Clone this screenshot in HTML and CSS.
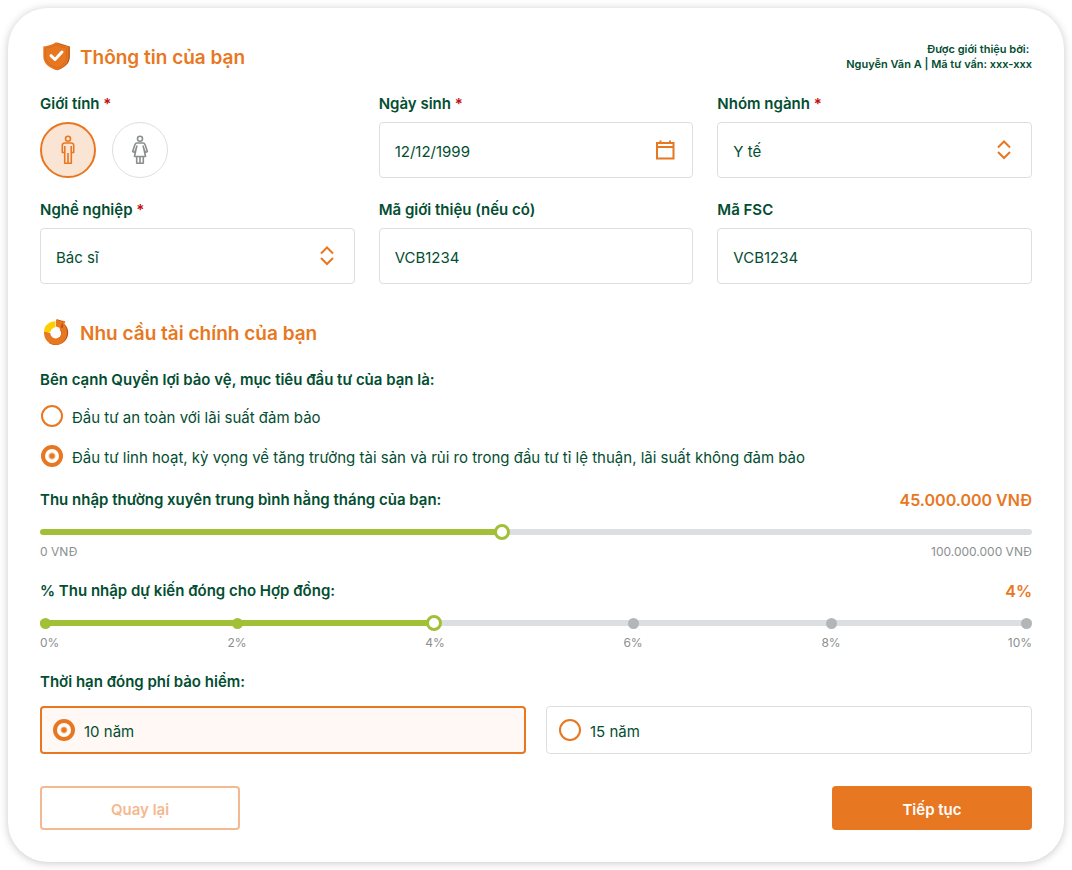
FILE: index.html
```html
<!DOCTYPE html>
<html lang="vi">
<head>
<meta charset="utf-8">
<meta name="viewport" content="width=device-width, initial-scale=1">
<title>Thông tin của bạn</title>
<link rel="stylesheet" href="styles.css">
</head>
<body>
<form class="card">
  <header class="section-head">
    <svg class="section-icon" viewBox="0 0 32 32" aria-hidden="true">
      <path fill="#b9500f" d="M17 2.500 29.900 6.500v10.300c0 6.500-5.400 11-12.400 13.500L14 29z"/>
      <path fill="#e87722" d="M16 2.300c3.800 2.300 8 3.500 12.600 4.200v10.300c0 6.200-4.600 10.700-11.600 13.400C8.500 28 3.300 23 3.300 16.500v-10C8 6 12.200 4.800 16 2.300z"/>
      <path fill="none" stroke="#cf6518" stroke-width=".7" d="M16 4.500c3.400 1.900 6.600 2.900 10.600 3.600v8.700c0 5.200-3.800 8.800-9.600 11.200-7-2.200-11.600-6-11.600-11.500V8.100C9.400 7.600 12.800 6.500 16 4.500z"/>
      <path fill="none" stroke="#fff" stroke-width="3" stroke-linecap="round" stroke-linejoin="round" d="m11 15.700 4 3.800 7-7.500"/>
    </svg>
    <h2 class="section-title">Thông tin của bạn</h2>
    <p class="referrer">Được giới thiệu bởi:&nbsp;<br>Nguyễn Văn A | Mã tư vấn: xxx-xxx</p>
  </header>

  <div class="fields">
    <fieldset class="field">
      <legend class="label">Giới tính <span class="required">*</span></legend>
      <div class="genders">
        <label class="gender">
          <input class="gender-input" type="radio" name="gender" value="male" aria-label="Nam" checked>
          <svg class="gender-icon" viewBox="0 0 32 32" aria-hidden="true">
            <circle cx="16" cy="4.800" r="2.500"/>
            <path d="M12.600 9h6.800a2.300 2.300 0 0 1 2.300 2.300v7.200h-2.400V29.300h-6.600V18.500h-2.400v-7.200A2.300 2.300 0 0 1 12.600 9zM12.800 12v7M19.200 12v7M16 19v10"/>
          </svg>
        </label>
        <label class="gender">
          <input class="gender-input" type="radio" name="gender" value="female" aria-label="Nữ">
          <svg class="gender-icon" viewBox="0 0 32 32" aria-hidden="true">
            <circle cx="16" cy="4.800" r="2.500"/>
            <path d="M12.800 9h6.400c1 0 1.500.7 1.800 1.600l2.400 7-2 .8-1.700-4.200 1.800 8.300H10.500l1.800-8.300-1.700 4.200-2-.8 2.400-7c.3-.9.800-1.600 1.800-1.600zM12.300 14.200l.7-2.700M19.700 14.200l-.7-2.700M12.700 22.500v6.800h6.600v-6.800M16 22.500v6.800"/>
          </svg>
        </label>
      </div>
    </fieldset>

    <div class="field">
      <label class="label" for="birthday">Ngày sinh <span class="required">*</span></label>
      <div class="control">
        <input class="control-input" id="birthday" type="text" value="12/12/1999">
        <button class="control-button" type="button" aria-label="Chọn ngày">
          <svg class="control-icon" viewBox="0 0 24 24" aria-hidden="true">
            <path d="M4 5h16.500v15.500H4zM4 9h16.500M7.500 2.500V5M17 2.500V5"/>
          </svg>
        </button>
      </div>
    </div>

    <div class="field">
      <label class="label" for="sector">Nhóm ngành <span class="required">*</span></label>
      <div class="control">
        <select class="control-input control-select" id="sector"><option>Y tế</option></select>
        <svg class="control-icon" viewBox="0 0 24 24" aria-hidden="true"><path d="m6 9.500 6-6 6 6M6 14l6 6 6-6"/></svg>
      </div>
    </div>

    <div class="field">
      <label class="label" for="job">Nghề nghiệp <span class="required">*</span></label>
      <div class="control">
        <select class="control-input control-select" id="job"><option>Bác sĩ</option></select>
        <svg class="control-icon" viewBox="0 0 24 24" aria-hidden="true"><path d="m6 9.500 6-6 6 6M6 14l6 6 6-6"/></svg>
      </div>
    </div>

    <div class="field">
      <label class="label" for="referral">Mã giới thiệu (nếu có)</label>
      <div class="control"><input class="control-input" id="referral" type="text" value="VCB1234"></div>
    </div>

    <div class="field">
      <label class="label" for="fsc">Mã FSC</label>
      <div class="control"><input class="control-input" id="fsc" type="text" value="VCB1234"></div>
    </div>
  </div>

  <header class="section-head section-head-next">
    <svg class="section-icon" viewBox="0 0 32 32" aria-hidden="true">
      <path fill="#b9500f" d="M22 6.500c4 2 6.200 5.700 6.200 10C28.200 24 22.500 29 16 29c-3 0-5-.6-7-2l9-5a5 5 0 0 0 2-8z"/>
      <path fill="#e87722" d="M4 15.300 10.300 17a5.600 5.600 0 1 0 9-4.600l3-6C25.500 8.500 27 12 27 16.500 27 24 22 28.800 15.600 28.800S3.500 24 4 15.300z"/>
      <path fill="#ffcd00" d="M4 15.500C4.300 9.500 9 5.400 15.500 5.300v6c-2.900.4-4.900 2.400-5.300 5.200z"/>
      <path fill="#b9500f" d="M17 3.200 24.500 5.500l-2 6.500-5.500-2z"/>
      <path fill="#e87722" d="m16 3.300 6.800 2.700-2.600 6-4.200-1.500zM22.500 4.500l3 1-2.500 5z"/>
      <path fill="#fff" d="m17 11.500 2.400.7-.8 2-2-.6z"/>
    </svg>
    <h2 class="section-title">Nhu cầu tài chính của bạn</h2>
  </header>

  <fieldset class="goals">
    <legend class="label">Bên cạnh Quyền lợi bảo vệ, mục tiêu đầu tư của bạn là:</legend>
    <label class="choice"><input class="radio" type="radio" name="goal"><span class="choice-text">Đầu tư an toàn với lãi suất đảm bảo</span></label>
    <label class="choice"><input class="radio" type="radio" name="goal" checked><span class="choice-text">Đầu tư linh hoạt, kỳ vọng về tăng trưởng tài sản và rủi ro trong đầu tư tỉ lệ thuận, lãi suất không đảm bảo</span></label>
  </fieldset>

  <div class="range-block">
    <div class="range-head">
      <label class="label" for="income">Thu nhập thường xuyên trung bình hằng tháng của bạn:</label>
      <output class="amount" for="income">45.000.000 VNĐ</output>
    </div>
    <div class="range">
      <input class="range-input" id="income" type="range" min="0" max="100" step="any" value="46.5" style="--fill: 46.5%">
    </div>
    <div class="range-ends"><span>0 VNĐ</span><span>100.000.000 VNĐ</span></div>
  </div>

  <div class="range-block">
    <div class="range-head">
      <label class="label" for="share">% Thu nhập dự kiến đóng cho Hợp đồng:</label>
      <output class="amount" for="share">4%</output>
    </div>
    <div class="range">
      <input class="range-input" id="share" type="range" min="0" max="10" step="any" value="3.96" style="--fill: 39.6%">
      <div class="scale dots" aria-hidden="true">
        <i class="dot dot-on"></i><i class="dot dot-on"></i><i></i><i class="dot"></i><i class="dot"></i><i class="dot"></i>
      </div>
    </div>
    <div class="scale"><span>0%</span><span>2%</span><span>4%</span><span>6%</span><span>8%</span><span>10%</span></div>
  </div>

  <fieldset class="term">
    <legend class="label">Thời hạn đóng phí bảo hiểm:</legend>
    <div class="term-options">
      <label class="term-option"><input class="radio" type="radio" name="term" checked><span class="choice-text">10 năm</span></label>
      <label class="term-option"><input class="radio" type="radio" name="term"><span class="choice-text">15 năm</span></label>
    </div>
  </fieldset>

  <footer class="actions">
    <button class="button button-back" type="button">Quay lại</button>
    <button class="button button-next" type="submit">Tiếp tục</button>
  </footer>
</form>
</body>
</html>
```
FILE: styles.css
```css
:root {
  --orange: #e87722;
  --green: #034e31;
  --lime: #a2c037;
  --line: #dbdfe1;
  --grey: #8b8f90;
}

* { box-sizing: border-box; }

body {
  margin: 0;
  padding: 8px;
  background: #fff;
  color: var(--green);
  font: 400 16px/24px Inter, "Open Sans", sans-serif;
}

h2, p, fieldset, legend { margin: 0; padding: 0; border: 0; }
fieldset { min-width: 0; }
input, select, button { margin: 0; font: inherit; color: inherit; }

.card {
  padding: 32px;
  border-radius: 40px;
  background: #fff;
  box-shadow: 0 1px 8px rgba(0, 0, 0, .22);
}

.section-head {
  display: flex;
  align-items: center;
  gap: 8px;
  margin-bottom: 20px;
}
.section-head-next { margin-top: 32px; }
.section-icon { width: 32px; height: 32px; flex: none; }
.section-title {
  flex: 1;
  padding-top: 4px;
  color: var(--orange);
  font-size: 19px;
  line-height: 28px;
  font-weight: 600;
}
.referrer {
  padding-top: 2px;
  font-size: 11px;
  line-height: 15px;
  font-weight: 600;
  text-align: right;
}

.fields {
  display: grid;
  grid-template-columns: repeat(3, minmax(0, 1fr));
  gap: 20px 24px;
}
.label {
  display: block;
  font-size: 15px;
  line-height: 24px;
  font-weight: 600;
}
.required { color: #c00d0d; }

.genders { display: flex; gap: 16px; margin-top: 6px; }
.gender { display: grid; place-items: center; color: var(--grey); }
.gender > * { grid-area: 1 / 1; }
.gender-input {
  appearance: none;
  width: 56px;
  height: 56px;
  border: 1px solid var(--line);
  border-radius: 50%;
}
.gender-input:checked { border: 2px solid var(--orange); background: #fae4d4; }
.gender:has(:checked) { color: var(--orange); }
.gender-icon {
  width: 32px;
  height: 32px;
  fill: none;
  stroke: currentColor;
  stroke-width: 1.6;
  stroke-linejoin: round;
  pointer-events: none;
}

.control { display: grid; align-items: center; margin-top: 6px; }
.control > * { grid-area: 1 / 1; }
.control-input {
  appearance: none;
  width: 100%;
  height: 56px;
  padding: 2px 15px 0;
  border: 1px solid var(--line);
  border-radius: 4px;
  background: #fff;
  font-size: 15px;
}
.control-select { padding-top: 3px; }
.control-button {
  display: flex;
  justify-self: end;
  padding: 0;
  border: 0;
  background: none;
}
.control-icon {
  justify-self: end;
  width: 24px;
  height: 24px;
  margin-right: 16px;
  fill: none;
  stroke: var(--orange);
  stroke-width: 2;
  pointer-events: none;
}

.choice { display: flex; align-items: center; gap: 8px; font-size: 15px; }
.choice-text { padding-top: 3px; line-height: 21px; }
.goals .choice { margin-top: 16px; }
.goals .label + .choice { margin-top: 12px; }
.radio {
  appearance: none;
  flex: none;
  width: 22px;
  height: 22px;
  margin: 1px;
  border: 2px solid var(--orange);
  border-radius: 50%;
  background: #fff;
}
.radio:checked {
  border-width: 4px;
  background: radial-gradient(circle, var(--orange) 2px, #fff 4px);
}

.range-block { margin-top: 20px; color: var(--grey); font-size: 12px; line-height: 15px; }
.range-head { display: flex; justify-content: space-between; color: var(--green); }
.amount { color: var(--orange); font-size: 16px; line-height: 24px; font-weight: 600; }
.range { position: relative; margin: 12px 0 4px; }
.range-input {
  appearance: none;
  display: block;
  width: 100%;
  height: 16px;
  background: none;
}
.range-input::-webkit-slider-runnable-track {
  height: 6px;
  border-radius: 3px;
  background: linear-gradient(to right, var(--lime) var(--fill), var(--line) var(--fill));
}
.range-input::-webkit-slider-thumb {
  appearance: none;
  width: 16px;
  height: 16px;
  margin-top: -5px;
  border: 3px solid var(--lime);
  border-radius: 50%;
  background: #fff;
}
.range-ends { display: flex; justify-content: space-between; }

/* Middle steps are centred in their columns, the first and last sit at the ends. */
.scale {
  display: grid;
  grid-template-columns: 98fr repeat(4, 198fr) 102fr;
  justify-items: center;
}
.scale > :first-child { justify-self: start; }
.scale > :last-child { justify-self: end; }
.dots { position: absolute; inset: 0; align-items: center; pointer-events: none; }
.dot { width: 11px; height: 11px; border-radius: 50%; background: #b3b6b8; }
.dot-on { background: var(--lime); }

.term { margin-top: 20px; }
.term-options {
  display: grid;
  grid-template-columns: 1fr 1fr;
  gap: 20px;
  margin-top: 12px;
}
.term-option {
  display: flex;
  align-items: center;
  gap: 8px;
  height: 48px;
  padding: 0 11px;
  border: 1px solid var(--line);
  border-radius: 4px;
  font-size: 15px;
}
.term-option:has(:checked) {
  padding: 0 10px;
  border: 2px solid var(--orange);
  background: #fff8f4;
}

.actions { display: flex; justify-content: space-between; margin-top: 32px; }
.button {
  width: 200px;
  height: 44px;
  padding: 4px 0 0;
  border: 2px solid var(--orange);
  border-radius: 4px;
  font-size: 15px;
  font-weight: 600;
}
.button-back { border-color: #f3b991; background: #fff; color: #f3b991; }
.button-next { background: var(--orange); color: #fff; }
```
